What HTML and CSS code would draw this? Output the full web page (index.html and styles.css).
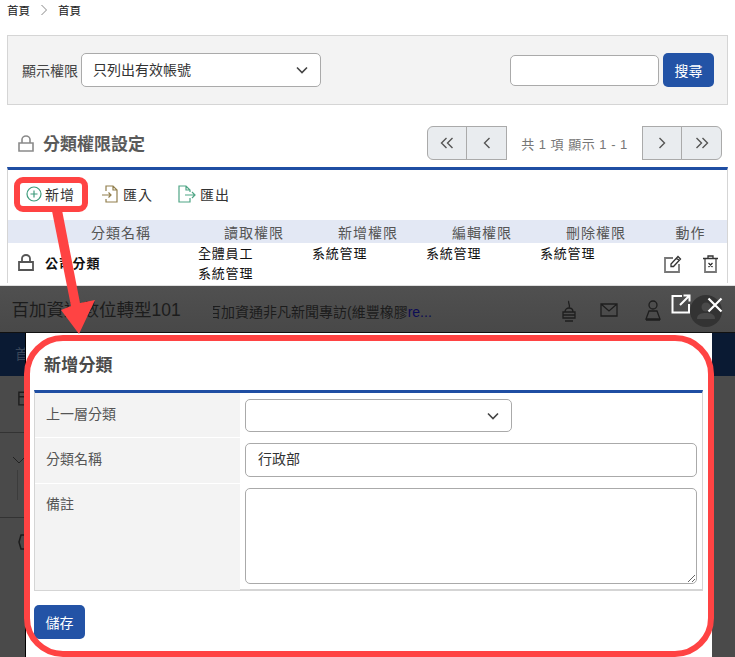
FILE: index.html
```html
<!DOCTYPE html>
<html lang="zh-Hant">
<head>
<meta charset="utf-8">
<title>分類權限設定</title>
<link rel="stylesheet" href="styles.css">
</head>
<body>
<div class="page">
  <nav class="crumbs"><span>首頁</span>
    <svg class="crumb-sep" viewBox="0 0 8 12"><path d="M1.5 1l5 5-5 5"/></svg>
    <span>首頁</span></nav>

  <section class="filter">
    <label class="filter-label">顯示權限</label>
    <div class="select filter-select"><span class="select-text">只列出有效帳號</span>
      <svg class="chev" viewBox="0 0 12 8"><path d="M1 1.5l5 5 5-5"/></svg></div>
    <input class="search-input" type="text">
    <button class="btn">搜尋</button>
  </section>

  <header class="title-row">
    <svg class="lock" viewBox="0 0 16 17"><path d="M1 8h14v8H1zM4 8V4.500a4 3.500 0 0 1 8 0V8"/></svg>
    <h1 class="title">分類權限設定</h1>
    <div class="pager">
      <div class="pager-group left">
        <span class="pg"><svg viewBox="0 0 14 12"><path d="M6.500 1l-5 5 5 5M12.500 1l-5 5 5 5"/></svg></span>
        <span class="pg"><svg viewBox="0 0 14 12"><path d="M9.500 1l-5 5 5 5"/></svg></span>
      </div>
      <span class="pager-text">共 1 項 顯示 1 - 1</span>
      <div class="pager-group right">
        <span class="pg"><svg viewBox="0 0 14 12"><path d="M4.500 1l5 5-5 5"/></svg></span>
        <span class="pg"><svg viewBox="0 0 14 12"><path d="M1.500 1l5 5-5 5M7.500 1l5 5-5 5"/></svg></span>
      </div>
    </div>
  </header>

  <section class="card">
    <div class="toolbar">
      <span class="tool tool-add">
        <svg viewBox="0 0 16 16"><circle cx="8" cy="8" r="7"/><path d="M8 4.500v7M4.500 8h7"/></svg>新增</span>
      <span class="tool tool-import">
        <svg viewBox="0 0 18 18"><path d="M5 6V1h7l4 4v12H5v-3M12 1v4h4M1 10h9M7.500 7.500L10 10l-2.500 2.500"/></svg>匯入</span>
      <span class="tool tool-export">
        <svg viewBox="0 0 18 18"><path d="M12 7V5L8 1H1v16h11v-4M8 1v4h4M7 10h10M14 7l3 3-3 3"/></svg>匯出</span>
    </div>
    <div class="grid head">
      <span>分類名稱</span><span>讀取權限</span><span>新增權限</span><span>編輯權限</span><span>刪除權限</span><span>動作</span>
    </div>
    <div class="grid row">
      <div class="name">
        <svg class="lock dark" viewBox="0 0 16 17"><path d="M1 8h14v8H1zM4 8V4.500a4 3.500 0 0 1 8 0V8"/></svg>
        <strong>公司分類</strong>
      </div>
      <div class="perm">全體員工<br>系統管理</div>
      <div class="perm">系統管理</div>
      <div class="perm">系統管理</div>
      <div class="perm">系統管理</div>
      <div class="actions">
        <svg class="act-edit" viewBox="0 0 18 18"><path class="box" d="M9 3H1v14h14V9"/><path d="M7 11.500V9l7-7.500 2.500 2.500-7 7.500zM12.500 3l2.500 2.500"/></svg>
        <svg class="act-del" viewBox="0 0 15 18"><path class="box" d="M2 4v13h11V4"/><path d="M0 3.500h15M5 3V1h5v2M5.500 8l4 4M9.500 8l-4 4"/></svg>
      </div>
    </div>
  </section>
</div>

<section class="window">
  <header class="win-head">
    <span class="win-title">百加資通數位轉型101</span>
    <span class="win-news">百加資通非凡新聞專訪(維豐橡膠<em>re...</em></span>
    <svg class="win-ic stamp" viewBox="0 0 14 23"><path d="M7 1c-2 1 2 4 0 7M3 12c0-3 2-4 4-4s4 1 4 4zM1 12h12v6H1zM1 15h12M3 21h8"/></svg>
    <svg class="win-ic mail" viewBox="0 0 18 14"><path d="M1 1h16v12H1zM1 1l8 7 8-7"/></svg>
    <svg class="win-ic user" viewBox="0 0 16 22"><circle cx="8" cy="6" r="4"/><path d="M4 12h8l3 8H1zM1 21h14"/></svg>
    <span class="win-avatar"><svg viewBox="0 0 20 18"><circle cx="10" cy="5" r="4.500"/><path d="M1 17c0-5 4-6 9-6s9 1 9 6z"/></svg></span>
    <svg class="win-popout" viewBox="0 0 20 20"><path d="M11 2H1.500v16.500H18V10M9 11l9-9M12.500 1.500h6v6"/></svg>
    <svg class="win-close" viewBox="0 0 16 16"><path d="M1.500 1.500l13 13M14.500 1.500l-13 13"/></svg>
  </header>
  <div class="win-body">
    <aside class="side side-left">
      <div class="side-nav">首</div>
      <div class="side-a"><svg viewBox="0 0 10 16"><path d="M1 1h8v14H1zM1 6h8"/></svg></div>
      <div class="side-b"><svg viewBox="0 0 14 8"><path d="M1 1l6 6 6-6"/></svg><i class="side-rule"></i></div>
      <div class="side-c"><svg viewBox="0 0 12 16"><path d="M3 1h6l2 7-2 7H3L1 8z"/></svg></div>
    </aside>
    <form class="modal">
      <h2 class="modal-title">新增分類</h2>
      <div class="form">
        <div class="f-row r1"><label>上一層分類</label>
          <div class="f-val"><div class="select parent-select"><svg class="chev" viewBox="0 0 12 8"><path d="M1 1.500l5 5 5-5"/></svg></div></div>
        </div>
        <div class="f-row r2"><label>分類名稱</label>
          <div class="f-val"><input class="text" type="text" value="行政部"></div>
        </div>
        <div class="f-row r3"><label>備註</label>
          <div class="f-val"><textarea class="area"></textarea></div>
        </div>
      </div>
      <button class="btn save" type="button">儲存</button>
    </form>
    <aside class="side side-right"><div class="side-nav"></div></aside>
  </div>
</section>

<svg class="marks" viewBox="0 0 735 657">
  <rect x="17" y="180" width="68" height="29" rx="6"/>
  <rect x="27" y="338" width="684" height="316" rx="36"/>
  <polygon class="arrow" points="52,211 62,210 80,303 95,300 79,334 61,310 71,306"/>
</svg>
</body>
</html>
```

FILE: styles.css
```css
* { box-sizing: border-box; }
html, body { margin: 0; height: 657px; overflow: hidden; }
body {
  position: relative;
  background: #fff;
  font-family: "Liberation Sans", "Noto Sans CJK TC", sans-serif;
  font-size: 14px;
  color: #333;
}
svg { display: block; fill: none; stroke-linecap: butt; }

.page { padding: 0 7px; }

.crumbs { display: flex; align-items: center; height: 35px; padding-bottom: 15px; font-size: 11.500px; color: #222; }
.crumb-sep { width: 8px; height: 12px; margin: 0 10px 0 10px; stroke: #888; stroke-width: 1; }

.filter {
  display: flex; align-items: center; height: 70px;
  padding: 0 13px 0 14px;
  background: #f3f3f3; border: 1px solid #d5d5d5;
}
.filter-label { color: #444; margin-right: 3px; white-space: nowrap; }
.select {
  position: relative; display: flex; align-items: center; height: 34px;
  padding-left: 11px; background: #fff; border: 1px solid #aaa; border-radius: 5px; color: #333;
}
.select-text { position: relative; top: -1px; }
.chev { position: absolute; right: 12px; top: 12px; width: 12px; height: 8px; stroke: #444; stroke-width: 1.600; }
.filter-select { width: 240px; }
.search-input { width: 149px; height: 31px; margin-left: auto; border: 1px solid #aaa; border-radius: 5px; background: #fff; }
.btn {
  width: 51px; height: 34px; padding: 0; border: 0; border-radius: 5px;
  background: #2353a6; color: #fff; font: inherit; font-size: 14px;
}
.filter .btn { margin-left: 4px; }

.title-row { display: flex; align-items: center; height: 34px; margin: 21px 0 7px; padding-left: 11px; }
.lock { width: 16px; height: 17px; stroke: #8a8a8a; stroke-width: 1.600; }
.lock.dark { stroke: #555; stroke-width: 1.800; }
.title { margin: 0 0 2px 9px; font-size: 17px; font-weight: 700; color: #5a5a5a; }
.pager { display: flex; align-items: center; margin-left: auto; margin-right: 6px; }
.pager-group { display: flex; }
.pg {
  display: flex; align-items: center; justify-content: center;
  width: 40px; height: 34px; background: #e9ecef; border: 1px solid #aaa;
}
.pg + .pg { margin-left: -1px; width: 41px; }
.pg svg { width: 14px; height: 12px; stroke: #555; stroke-width: 1.400; }
.pager-group.left .pg:first-child { border-radius: 6px 0 0 6px; }
.pager-group.right .pg:last-child { border-radius: 0 6px 6px 0; }
.pager-text { width: 135px; text-align: center; font-size: 13px; letter-spacing: .5px; color: #777; }

.card { height: 116px; border-top: 3px solid #1f4ea3; border-left: 1px solid #d5d5d5; border-right: 1px solid #d5d5d5; }
.toolbar { display: flex; align-items: center; height: 50px; padding: 0 0 2px 18px; letter-spacing: 1px; color: #333; }
.tool { display: flex; align-items: center; gap: 3px; }
.tool svg { stroke-width: 1.200; }
.tool-add svg { width: 16px; height: 16px; stroke: #3f9c7c; }
.tool-import { margin-left: 26px; }
.tool-import svg { width: 18px; height: 18px; stroke: #927f4d; margin-right: 1px; }
.tool-export { margin-left: 25px; gap: 4px; }
.tool-export svg { width: 18px; height: 18px; stroke: #4fa585; }

.grid { display: grid; grid-template-columns: 190px 114px 114px 114px 114px 1fr; }
.head { height: 23px; align-items: center; text-align: center; background: #e3e8f4; letter-spacing: 1px; color: #555; }
.head span { padding-right: 2px; }
.head span:first-child { padding-left: 38px; }
.head span:last-child { padding-right: 0; }
.row { height: 42px; font-size: 13px; letter-spacing: .8px; color: #111; }
.perm { padding-top: 1px; line-height: 20px; }
.name { display: flex; align-items: center; padding: 0 0 3px 10px; gap: 11px; }
.name strong { font-weight: 700; letter-spacing: .8px; }
.actions { display: flex; align-items: flex-start; padding: 12px 0 0 10px; gap: 21px; }
.actions svg { height: 18px; stroke: #333; stroke-width: 1.300; }
.actions .box { stroke: #777; stroke-width: 1.800; }
.act-edit { width: 18px; }
.act-del { width: 15px; }

.window { position: absolute; left: 0; right: 0; top: 285px; bottom: 0; border-top: 1px solid #e0e0e0; background: #4a4a4a; }
.win-head { position: relative; height: 46px; background: linear-gradient(#505050, #484848); color: #1c1c1c; }
.win-title { position: absolute; left: 11.500px; top: 10px; font-size: 17.500px; }
.win-news { position: absolute; left: 213px; top: 15px; width: 220px; overflow: hidden; white-space: nowrap; text-indent: -6px; font-size: 14px; }
.win-news em { font-style: normal; color: #0d0d55; }
.win-ic { position: absolute; stroke: #1e1e1e; stroke-width: 1.300; }
.stamp { left: 562px; top: 14px; width: 14px; height: 23px; }
.mail { left: 600px; top: 17px; width: 18px; height: 14px; }
.user { left: 645px; top: 13px; width: 16px; height: 22px; }
.win-avatar { position: absolute; left: 690px; top: 9px; display: flex; align-items: center; justify-content: center; width: 32px; height: 32px; border-radius: 50%; background: #333; }
.win-avatar svg { width: 20px; height: 18px; fill: #4a4a4a; }
.win-popout { position: absolute; left: 671px; top: 8px; width: 20px; height: 20px; stroke: #fff; stroke-width: 2; }
.win-close { position: absolute; left: 707px; top: 11px; width: 16px; height: 16px; stroke: #fff; stroke-width: 2.200; }

.win-body { display: flex; height: 325px; border-top: 1px solid #111; }
.side { flex: none; }
.side-left { width: 25px; }
.side-right { flex: 1; }
.side-nav { height: 43px; padding: 10px 0 0 15px; background: #0a1a33; color: #3a4658; }
.side-a { height: 57px; padding: 15px 0 0 18px; border-bottom: 1px solid #333; }
.side-a svg { width: 9px; height: 15px; stroke: #1c1c1c; stroke-width: 1.500; }
.side-b { height: 85px; padding: 23px 0 0 12px; border-bottom: 1px solid #333; }
.side-b svg { width: 14px; height: 8px; stroke: #222; stroke-width: 1; }
.side-rule { display: block; width: 1px; height: 30px; margin: 6px 0 0 5px; background: #3c3c3c; }
.side-c { padding: 16px 0 0 18px; }
.side-c svg { width: 12px; height: 16px; stroke: #1c1c1c; stroke-width: 1.500; }

.modal { width: 687px; flex: none; padding: 4px 9px 0 8px; background: #fff; border-left: 1px solid #000; }
.modal-title { display: flex; align-items: center; height: 53px; margin: 0 0 0 1px; padding: 0 0 0 9px; font-size: 17px; font-weight: 700; color: #4a4a4a; letter-spacing: .2px; }
.form { width: 669px; height: 201px; border: 1px solid #d5d5d5; border-top: 3px solid #1f4ea3; border-bottom-width: 2px; }
.f-row { display: flex; }
.f-row label { flex: none; width: 205px; padding-left: 11px; background: #f3f3f3; color: #555; letter-spacing: 0; }
.f-val { flex: 1; padding-left: 5px; }
.r1 { height: 44px; }
.r1 label { line-height: 43px; }
.r1 .f-val { padding-top: 6px; }
.r2 { height: 45px; margin-top: 1px; }
.r2 label { line-height: 43px; }
.r2 .f-val { padding-top: 5px; }
.r3 { height: 106px; margin-top: 1px; }
.r3 label { padding-top: 11px; line-height: 18px; }
.r3 .f-val { padding-top: 4px; }
.parent-select { width: 267px; height: 33px; }
.text { display: block; width: 452px; height: 34px; padding: 0 12px 4px; border: 1px solid #aaa; border-radius: 5px; font: inherit; color: #333; }
.area { display: block; width: 452px; height: 96px; border: 1px solid #aaa; border-radius: 5px; }
.save { display: block; margin-top: 14px; margin-left: 0; }

.marks { position: absolute; left: 0; top: 0; width: 735px; height: 657px; pointer-events: none; }
.marks rect { fill: none; stroke: #ff4343; stroke-width: 6; }
.marks .arrow { fill: #ff4343; }
```
